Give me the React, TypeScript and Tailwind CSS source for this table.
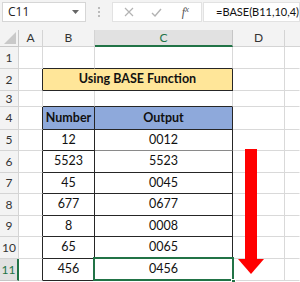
import React from "react";

const G = "#d9d9d9";
const rowsH = [22, 22, 16, 23, 21, 22, 21, 22, 21, 22, 22];
const data: [string, string][] = [
  ["12", "0012"],
  ["5523", "5523"],
  ["45", "0045"],
  ["677", "0677"],
  ["8", "0008"],
  ["65", "0065"],
  ["456", "0456"],
];

function Cell({
  children,
  className = "",
  right = G,
  bottom = G,
  bg,
  span,
}: {
  children?: React.ReactNode;
  className?: string;
  right?: string;
  bottom?: string;
  bg?: string;
  span?: number;
}) {
  return (
    <div
      className={"flex items-center justify-center border-r border-b " + className}
      style={{ borderRightColor: right, borderBottomColor: bottom, background: bg, gridColumn: span ? `span ${span}` : undefined }}
    >
      {children}
    </div>
  );
}

export default function App() {
  const font = { fontFamily: "Lato, 'Open Sans', sans-serif" };
  return (
    <div className="w-[300px] h-[282px] overflow-hidden bg-white relative" style={font}>
      {/* formula bar */}
      <div className="h-[30px] bg-[#f3f3f3] flex items-start pt-[2px] pl-[2px]">
        <div className="shrink-0 w-[84px] h-[20px] bg-white border border-[#d6d6d6] flex items-center pl-[5px] pr-[6px] text-[12px] text-[#222]">
          <span className="flex-1" style={{ fontFamily: "'Open Sans', sans-serif" }}>C11</span>
          <svg width="7" height="4" viewBox="0 0 7 4"><path d="M0 0 L7 0 L3.5 4 Z" fill="#666" /></svg>
        </div>
        <div className="shrink-0 w-[26px] h-[20px] flex flex-col items-center justify-center gap-[2px]">
          <div className="w-[2px] h-[2px] bg-[#bbb]" />
          <div className="w-[2px] h-[2px] bg-[#bbb]" />
          <div className="w-[2px] h-[2px] bg-[#bbb]" />
        </div>
        <div className="shrink-0 w-[90px] h-[20px] bg-white border border-[#e2e2e2] flex items-center">
          <div className="w-[32px] flex justify-center">
            <svg width="10" height="10" viewBox="0 0 10 10"><path d="M1 1 L9 9 M9 1 L1 9" stroke="#b3b3b3" strokeWidth="1.2" /></svg>
          </div>
          <div className="w-[26px] flex justify-center">
            <svg width="11" height="9" viewBox="0 0 11 9"><path d="M1 5 L4 8 L10 1" stroke="#b3b3b3" strokeWidth="1.4" fill="none" /></svg>
          </div>
          <div className="w-[32px] flex justify-center text-[12px] italic text-[#555]" style={{ fontFamily: "'Liberation Serif', serif" }}>
            f<span className="text-[9px]">x</span>
          </div>
        </div>
        <div className="ml-[1px] min-w-0 flex-1 h-[20px] bg-white border border-[#e2e2e2] flex items-center pl-[12px] text-[11px] text-[#111] whitespace-nowrap overflow-hidden">
          =BASE(B11,10,4)
        </div>
      </div>

      {/* sheet grid */}
      <div
        className="grid text-[12.5px] text-[#111]"
        style={{
          gridTemplateColumns: "19px 24px 52px 138px 52px 15px",
          gridTemplateRows: "17px " + rowsH.map((h) => h + "px").join(" "),
        }}
      >
        {/* header row */}
        <div className="bg-[#f3f3f3] border-r border-b border-[#c8c8c8] relative">
          <svg className="absolute right-[2px] bottom-[2px]" width="12" height="12" viewBox="0 0 12 12"><path d="M12 0 L12 12 L0 12 Z" fill="#c9c9c9" /></svg>
        </div>
        <div className="bg-[#f3f3f3] border-r border-b border-[#d4d4d4] flex items-center justify-center text-[12px] text-[#333]">A</div>
        <div className="bg-[#f3f3f3] border-r border-b border-[#d4d4d4] flex items-center justify-center text-[12px] text-[#333]">B</div>
        <div className="bg-[#e1e1e1] border-r border-[#c6c6c6] border-b-2 border-b-[#217346] flex items-center justify-center text-[12px] text-[#217346]">C</div>
        <div className="bg-[#f3f3f3] border-r border-b border-[#d4d4d4] flex items-center justify-center text-[12px] text-[#333]">D</div>
        <div className="bg-[#f3f3f3] border-b border-[#d4d4d4]" />

        {rowsH.map((_, i) => {
          const r = i + 1;
          const isSel = r === 11;
          const head = (
            <div
              key={"h" + r}
              className={
                "flex items-center justify-center text-[12px] border-b " +
                (isSel
                  ? "bg-[#e1e1e1] border-r-2 border-r-[#217346] border-b-[#c6c6c6] text-[#217346]"
                  : "bg-[#f3f3f3] border-r border-[#d4d4d4] text-[#333]")
              }
            >
              {r}
            </div>
          );
          const inTable = r >= 4;
          const K = "#262626";
          const cells: React.ReactNode[] = [];
          cells.push(<Cell key={"a" + r} right={inTable || r === 2 ? K : G} />);
          if (r === 2) {
            cells.push(
              <Cell key={"t" + r} span={2} right={K} bottom={K} bg="#ffe699" className="font-bold">
                Using BASE Function
              </Cell>
            );
          } else if (r === 4) {
            cells.push(
              <Cell key={"b" + r} right={K} bottom={K} bg="#8ea9db" className="font-bold">Number</Cell>,
              <Cell key={"c" + r} right={K} bottom={K} bg="#8ea9db" className="font-bold">Output</Cell>
            );
          } else if (r >= 5) {
            const [n, o] = data[r - 5];
            cells.push(
              <Cell key={"b" + r} right={K} bottom={K}>{n}</Cell>,
              <Cell key={"c" + r} right={K} bottom={r === 5 ? "#8a8a8a" : K} className="relative">
                {o}
                {isSel && (
                  <>
                    <div className="absolute left-[-2px] top-[-2px] right-[-2px] bottom-[-1px] border-2 border-[#217346]" />
                    <div className="absolute right-[-4px] bottom-[-4px] w-[5px] h-[5px] bg-[#217346] border border-white" />
                  </>
                )}
              </Cell>
            );
          } else {
            const topOfTable = r === 3 || r === 1;
            cells.push(
              <Cell key={"b" + r} bottom={topOfTable ? K : G} />,
              <Cell key={"c" + r} bottom={topOfTable ? K : G} />
            );
          }
          cells.push(<Cell key={"d" + r} />, <Cell key={"e" + r} right="transparent" />);
          return [head, ...cells];
        })}
      </div>

      {/* red arrow */}
      <svg className="absolute left-[237px] top-[149px]" width="28" height="126" viewBox="0 0 28 126">
        <rect x="8" y="0" width="12" height="111" fill="#ff0000" />
        <path d="M1 110 L27 110 L14 125 Z" fill="#ff0000" />
      </svg>
    </div>
  );
}
